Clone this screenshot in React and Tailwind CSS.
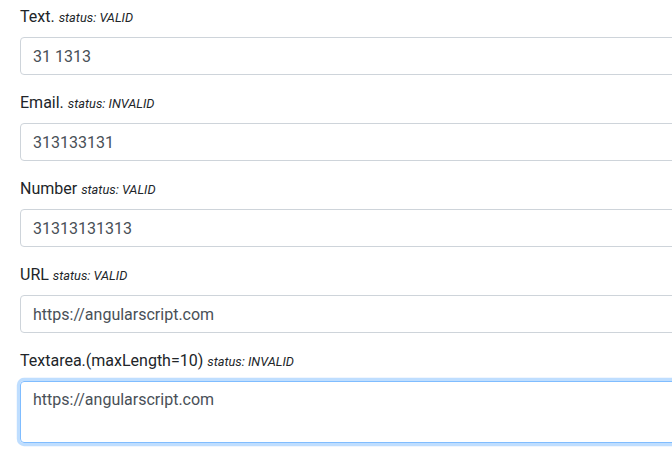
export default function App() {
  const fields = [
    { label: "Text.", status: "VALID", value: "31 1313" },
    { label: "Email.", status: "INVALID", value: "313133131" },
    { label: "Number", status: "VALID", value: "31313131313" },
    { label: "URL", status: "VALID", value: "https://angularscript.com" },
  ];
  return (
    <div
      className="w-[672px] h-[456px] overflow-hidden bg-white pl-5 pt-[5px] text-[16px] text-[#212529]"
      style={{ fontFamily: '"Segoe UI", Roboto, sans-serif' }}
    >
      <div className="w-[700px]">
        {fields.map((f) => (
          <div key={f.label} className="mb-4">
            <label className="block h-6 mb-2 leading-6">
              {f.label} <small className="italic text-[12.8px] leading-none">status: {f.status}</small>
            </label>
            <input
              readOnly
              value={f.value}
              className="block w-full h-[38px] px-3 py-[6px] leading-6 text-[#495057] border border-[#ced4da] rounded-[4px] outline-none"
            />
          </div>
        ))}
        <div className="mb-4">
          <label className="block h-6 mb-2 leading-6">
            Textarea.(maxLength=10) <small className="italic text-[12.8px] leading-none">status: INVALID</small>
          </label>
          <textarea
            readOnly
            rows={2}
            value="https://angularscript.com"
            className="block w-full h-[62px] px-3 py-[6px] leading-6 text-[#495057] border border-[#80bdff] rounded-[4px] outline-none resize-none shadow-[0_0_0_3.2px_rgba(0,123,255,0.25)]"
          />
        </div>
      </div>
    </div>
  );
}
